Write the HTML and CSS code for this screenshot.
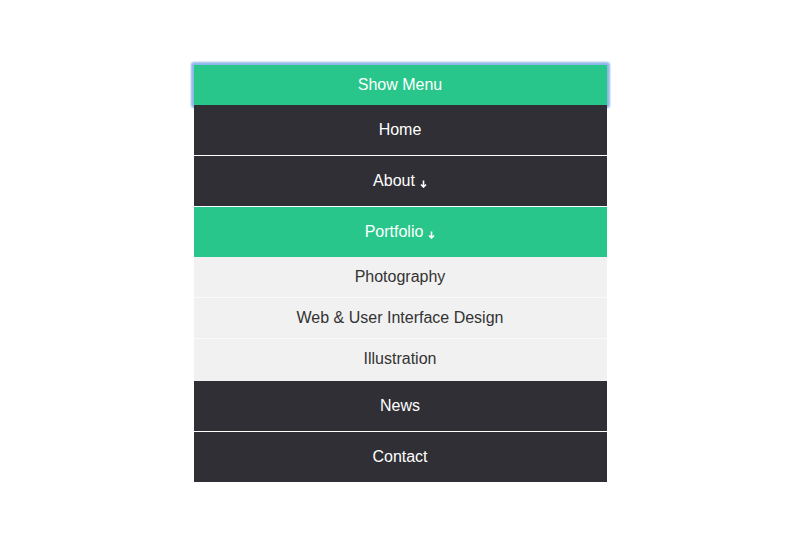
FILE: index.html
```html
<!DOCTYPE html>
<html lang="en">

<head>
    <meta charset="UTF-8">
    <meta name="viewport" content="width=device-width, initial-scale=1.0">
    <link rel="stylesheet" href="styles.css">
    <title>Dropdown Menu</title>
</head>

<body>
    <nav class="menu">
        <button class="menu-toggle">Show Menu</button>
        <ul class="menu-list">
            <li><a href="#">Home</a></li>
            <li>
                <a href="#">About
                    <svg class="arrow" width="7" height="8" viewBox="0 0 7 8"><path d="M3.5 0.5V7M1 4.5L3.5 7L6 4.5" fill="none" stroke="#fff" stroke-width="1.6"/></svg>
                </a>
            </li>
            <li class="open">
                <a href="#" class="active">Portfolio
                    <svg class="arrow" width="7" height="8" viewBox="0 0 7 8"><path d="M3.5 0.5V7M1 4.5L3.5 7L6 4.5" fill="none" stroke="#fff" stroke-width="1.6"/></svg>
                </a>
                <ul class="submenu">
                    <li><a href="#">Photography</a></li>
                    <li><a href="#">Web &amp; User Interface Design</a></li>
                    <li><a href="#">Illustration</a></li>
                </ul>
            </li>
            <li><a href="#">News</a></li>
            <li><a href="#">Contact</a></li>
        </ul>
    </nav>
</body>

</html>
```

FILE: styles.css
```css
body {
    margin: 0;
    background: #ffffff;
    font-family: "Liberation Sans", Arial, sans-serif;
    font-size: 16px;
}

.menu {
    width: 413px;
    margin: 0 auto;
    padding-top: 65px;
}

.menu-toggle {
    display: block;
    width: 100%;
    height: 40px;
    border: none;
    border-radius: 1px;
    background-color: #28c68b;
    color: #ffffff;
    font-family: inherit;
    font-size: 16px;
    padding-top: 1px;
    box-shadow: 0 0 0 1px #8fb6ea, 0 0 2px 3px rgba(110, 160, 225, 0.75);
}

.menu-list,
.submenu {
    list-style: none;
    margin: 0;
    padding: 0;
}

.menu-list > li > a {
    display: flex;
    align-items: center;
    justify-content: center;
    gap: 5px;
    height: 50px;
    border-bottom: 1px solid #ffffff;
    background-color: #2f2f35;
    color: #ffffff;
    text-decoration: none;
}

.menu-list > li > a.active {
    background-color: #28c68b;
    border-bottom: none;
}

.arrow {
    margin-top: 5px;
}

.submenu a {
    display: flex;
    align-items: center;
    justify-content: center;
    height: 40px;
    border-bottom: 1px solid #fafafa;
    background-color: #f1f1f1;
    color: #333333;
    text-decoration: none;
}

.submenu li:last-child a {
    border-bottom: 2px solid #f1f1f1;
}

.menu-list > li:last-child > a {
    border-bottom: none;
}
```
